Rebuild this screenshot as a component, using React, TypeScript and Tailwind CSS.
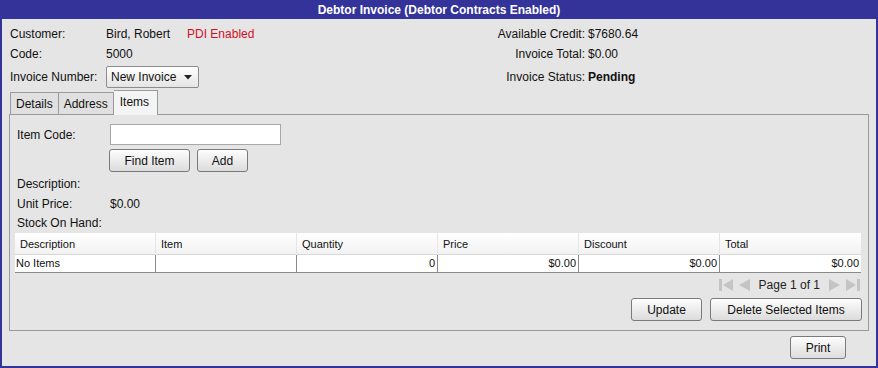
import React from 'react';

const btn =
  'h-[23px] rounded-[3px] border border-[#7a7a7a] bg-gradient-to-b from-[#fdfdfd] to-[#dcdcdc] text-[12px] text-[#111] shadow-[inset_0_1px_0_#fff]';

function First() {
  return (
    <svg width="16" height="14" viewBox="0 0 16 14">
      <rect x="1" y="1" width="3" height="12" fill="#c4c4c4" />
      <polygon points="15,1 15,13 5,7" fill="#c4c4c4" />
    </svg>
  );
}
function Prev() {
  return (
    <svg width="13" height="14" viewBox="0 0 13 14">
      <polygon points="12,1 12,13 1,7" fill="#c4c4c4" />
    </svg>
  );
}
function Next() {
  return (
    <svg width="13" height="14" viewBox="0 0 13 14">
      <polygon points="1,1 1,13 12,7" fill="#c4c4c4" />
    </svg>
  );
}
function Last() {
  return (
    <svg width="16" height="14" viewBox="0 0 16 14">
      <polygon points="1,1 1,13 11,7" fill="#c4c4c4" />
      <rect x="12" y="1" width="3" height="12" fill="#c4c4c4" />
    </svg>
  );
}

const columns = ['Description', 'Item', 'Quantity', 'Price', 'Discount', 'Total'];
const row = ['No Items', '', '0', '$0.00', '$0.00', '$0.00'];

export default function App() {
  return (
    <div
      className="w-[878px] h-[368px] flex flex-col bg-[#e5e5e5] border-x-2 border-b-2 border-[#333399] text-[12px] text-[#111] overflow-hidden"
      style={{ fontFamily: '"Liberation Sans", Arial, sans-serif' }}
    >
      {/* title bar */}
      <div className="h-[19px] shrink-0 bg-[#333399] text-white font-bold text-center leading-[20px]">
        Debtor Invoice (Debtor Contracts Enabled)
      </div>

      {/* header info */}
      <div className="flex pt-[5px]">
        <div className="w-[436px] pl-[8px]">
          <div className="h-[20px] flex items-center">
            <span className="w-[96px]">Customer:</span>
            <span>Bird, Robert</span>
            <span className="ml-[17px] text-[#d40f1f]">PDI Enabled</span>
          </div>
          <div className="h-[20px] flex items-center">
            <span className="w-[96px]">Code:</span>
            <span>5000</span>
          </div>
          <div className="h-[22px] mt-[2px] flex items-center">
            <span className="w-[96px]">Invoice Number:</span>
            <div className="h-[22px] w-[93px] flex items-center justify-between pl-[4px] pr-[6px] rounded-[2px] border border-[#8c8c8c] bg-gradient-to-b from-[#ffffff] to-[#e4e4e4]">
              <span>New Invoice</span>
              <svg width="8" height="5" viewBox="0 0 8 5">
                <polygon points="0,0 8,0 4,4.5" fill="#222" />
              </svg>
            </div>
          </div>
        </div>
        <div className="grid grid-cols-[147px_auto] gap-x-[3px] auto-rows-min">
          <span className="h-[20px] leading-[20px] text-right">Available Credit:</span>
          <span className="h-[20px] leading-[20px]">$7680.64</span>
          <span className="h-[20px] leading-[20px] text-right">Invoice Total:</span>
          <span className="h-[20px] leading-[20px]">$0.00</span>
          <span className="h-[22px] mt-[2px] leading-[22px] text-right">Invoice Status:</span>
          <span className="h-[22px] mt-[2px] leading-[22px] font-bold">Pending</span>
        </div>
      </div>

      {/* tabs */}
      <div className="flex items-end h-[25px] mt-[1px] pl-[8px] relative z-10">
        <div className="h-[22px] px-[5px] border border-b-0 border-[#9a9a9a] bg-[#e0e0e0] leading-[22px]">Details</div>
        <div className="h-[22px] px-[5px] border border-b-0 border-l-0 border-[#9a9a9a] bg-[#e0e0e0] leading-[22px]">Address</div>
        <div className="h-[25px] w-[44px] pl-[6px] -mb-px border border-b-0 border-l-0 border-[#9a9a9a] bg-[#f4f4f4] leading-[22px]">Items</div>
      </div>

      {/* tab panel */}
      <div className="mx-[7px] h-[217px] border border-[#9a9a9a] flex flex-col pt-[9px]">
        <div className="flex items-center h-[21px] pl-[7px]">
          <span className="w-[93px]">Item Code:</span>
          <div className="w-[171px] h-[21px] bg-white border border-[#a8a8a8]" />
        </div>
        <div className="flex gap-[7px] mt-[4px] pl-[99px]">
          <button className={btn + ' w-[81px]'}>Find Item</button>
          <button className={btn + ' w-[51px]'}>Add</button>
        </div>
        <div className="pl-[7px] mt-[3px]">
          <div className="h-[19px] leading-[19px]">Description:</div>
          <div className="h-[19px] flex items-center">
            <span className="w-[93px]">Unit Price:</span>
            <span>$0.00</span>
          </div>
          <div className="h-[20px] leading-[20px]">Stock On Hand:</div>
        </div>

        {/* table */}
        <div className="mx-[5px] w-[846px] border-b border-[#8a8a8a] text-[11px]">
          <div className="grid grid-cols-6 h-[22px] bg-gradient-to-b from-[#ffffff] to-[#f2f2f2] border-b border-[#d8d8d8]">
            {columns.map((c) => (
              <div key={c} className="pl-[5px] leading-[22px] border-r border-[#e6e6e6] last:border-r-0">
                {c}
              </div>
            ))}
          </div>
          <div className="grid grid-cols-6 h-[17px] bg-white">
            {row.map((v, i) => (
              <div
                key={i}
                className={
                  'leading-[17px] border-r border-[#8a8a8a] last:border-r-0 ' +
                  (i === 0 ? 'pl-[1px]' : 'text-right pr-[2px]')
                }
              >
                {v}
              </div>
            ))}
          </div>
        </div>

        <div className="flex items-center justify-end gap-[4px] h-[20px] mt-[2px] pr-[7px]">
          <First />
          <Prev />
          <span className="mx-[4px] text-[#222]">Page 1 of 1</span>
          <Next />
          <Last />
        </div>

        <div className="flex justify-end gap-[8px] mt-[3px] pr-[6px]">
          <button className={btn + ' w-[71px]'}>Update</button>
          <button className={btn + ' w-[152px]'}>Delete Selected Items</button>
        </div>
      </div>

      <div className="flex justify-end pr-[30px] mt-[5px]">
        <button className={btn + ' w-[56px]'}>Print</button>
      </div>
    </div>
  );
}
